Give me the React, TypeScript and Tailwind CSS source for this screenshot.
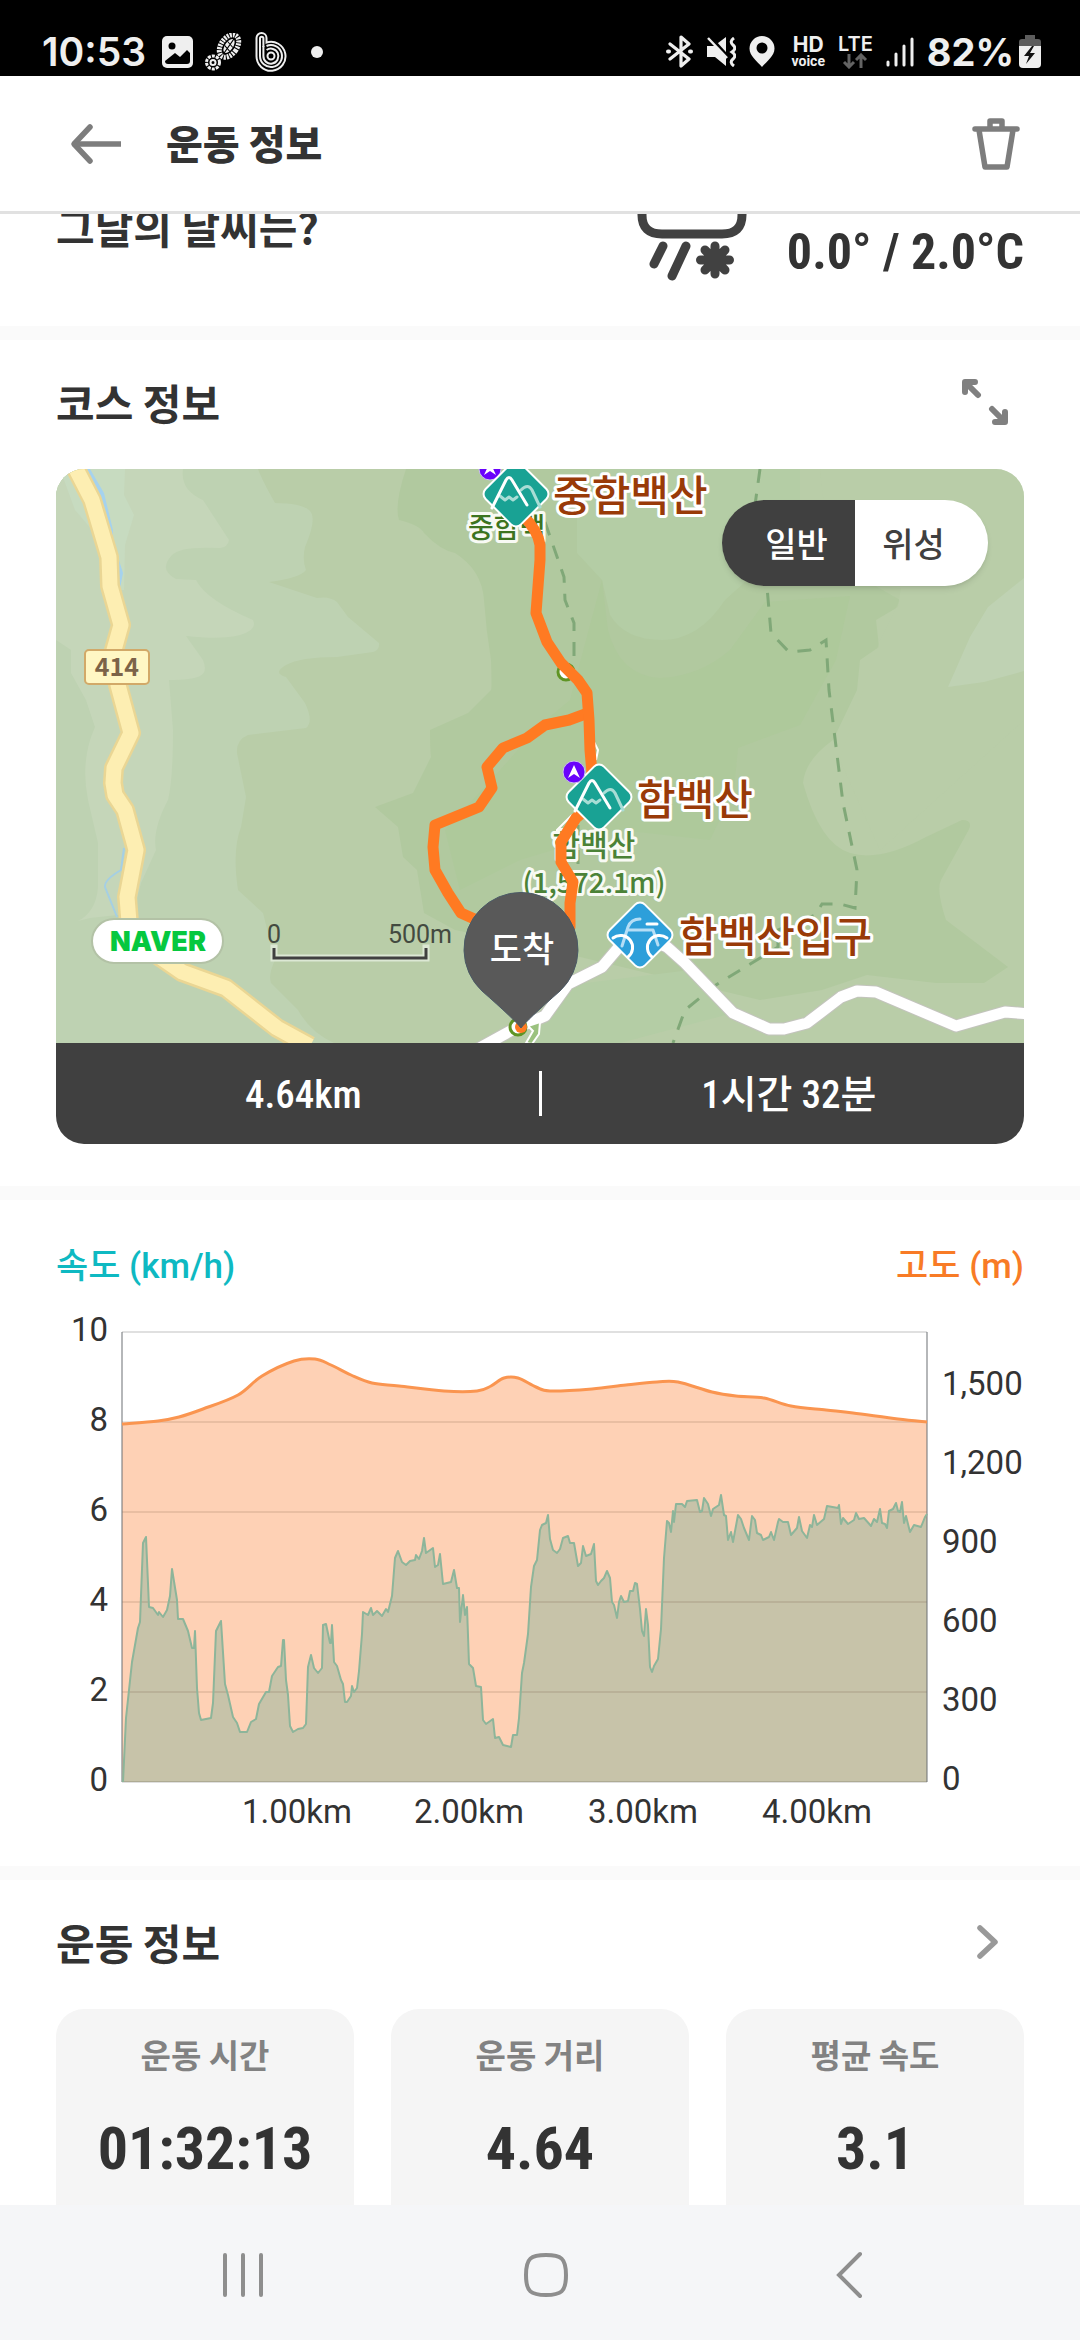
import type { ReactNode } from "react";

type Point = [number, number];

const ELEVATION: Point[] = [
  [122, 1424], [158, 1421], [179, 1417], [203, 1409], [238, 1395], [262, 1376], [294, 1361], [315, 1359],
  [331, 1365], [351, 1375], [372, 1383], [399, 1386], [444, 1391], [477, 1391], [491, 1386], [504, 1378],
  [518, 1378], [536, 1387], [550, 1391], [592, 1389], [626, 1385], [657, 1382], [678, 1382], [712, 1392],
  [736, 1396], [764, 1398], [791, 1406], [826, 1410], [853, 1413], [898, 1419], [927, 1422],
];

const SPEED: Point[] = [
  [123, 1782], [126, 1718], [132, 1662], [138, 1628], [140, 1622], [143, 1543], [146, 1537], [149, 1607],
  [153, 1608], [158, 1615], [159, 1612], [163, 1617], [167, 1610], [170, 1596], [172, 1569], [177, 1600],
  [178, 1619], [183, 1619], [188, 1631], [192, 1648], [194, 1648], [195, 1631], [197, 1688], [199, 1713],
  [201, 1720], [211, 1718], [213, 1703], [216, 1631], [221, 1621], [225, 1684], [228, 1695], [233, 1717],
  [237, 1723], [240, 1732], [247, 1732], [251, 1722], [256, 1719], [259, 1704], [266, 1692], [269, 1692],
  [272, 1676], [278, 1667], [281, 1666], [283, 1640], [284, 1640], [286, 1680], [288, 1695], [290, 1726],
  [293, 1732], [298, 1729], [303, 1728], [306, 1724], [308, 1667], [311, 1655], [314, 1668], [318, 1673],
  [322, 1668], [323, 1625], [326, 1624], [330, 1643], [331, 1643], [332, 1625], [334, 1662], [337, 1666],
  [341, 1680], [343, 1684], [345, 1702], [347, 1702], [351, 1696], [352, 1686], [354, 1692], [357, 1688],
  [359, 1671], [362, 1634], [363, 1612], [368, 1615], [371, 1608], [373, 1615], [377, 1611], [382, 1616],
  [386, 1609], [388, 1612], [392, 1596], [395, 1558], [398, 1551], [402, 1562], [406, 1565], [410, 1561],
  [415, 1560], [416, 1555], [419, 1559], [422, 1551], [424, 1538], [426, 1553], [433, 1548], [435, 1567],
  [438, 1565], [440, 1554], [443, 1584], [451, 1582], [454, 1570], [457, 1588], [459, 1588], [460, 1622],
  [463, 1595], [465, 1615], [467, 1607], [469, 1664], [473, 1668], [476, 1686], [481, 1687], [483, 1720],
  [486, 1724], [493, 1719], [495, 1738], [499, 1737], [503, 1745], [511, 1747], [513, 1735], [517, 1735],
  [519, 1718], [522, 1673], [524, 1663], [528, 1634], [531, 1587], [534, 1566], [537, 1560], [540, 1530],
  [542, 1525], [546, 1523], [548, 1515], [550, 1539], [553, 1550], [557, 1553], [560, 1549], [563, 1538],
  [568, 1536], [570, 1543], [574, 1543], [578, 1566], [581, 1563], [583, 1546], [586, 1556], [591, 1554],
  [594, 1544], [596, 1581], [598, 1585], [601, 1581], [604, 1578], [607, 1571], [610, 1578], [612, 1602],
  [614, 1605], [617, 1618], [619, 1602], [621, 1596], [624, 1602], [628, 1601], [630, 1591], [633, 1591],
  [635, 1583], [637, 1584], [640, 1609], [642, 1631], [644, 1636], [646, 1609], [648, 1625], [650, 1667],
  [652, 1672], [654, 1666], [658, 1659], [661, 1629], [664, 1558], [667, 1521], [669, 1523], [671, 1532],
  [673, 1511], [674, 1522], [676, 1504], [682, 1504], [685, 1507], [687, 1501], [697, 1500], [700, 1512],
  [702, 1511], [704, 1498], [708, 1504], [711, 1516], [713, 1509], [719, 1505], [721, 1495], [724, 1515],
  [726, 1516], [728, 1540], [731, 1532], [733, 1542], [738, 1515], [741, 1519], [744, 1528], [749, 1540],
  [752, 1516], [755, 1520], [757, 1533], [761, 1535], [763, 1540], [769, 1537], [771, 1532], [774, 1540],
  [778, 1522], [779, 1519], [783, 1522], [788, 1522], [791, 1535], [797, 1528], [799, 1517], [802, 1531],
  [807, 1538], [810, 1525], [812, 1527], [814, 1515], [817, 1525], [824, 1519], [827, 1506], [838, 1508],
  [839, 1505], [841, 1524], [843, 1518], [848, 1524], [854, 1520], [856, 1513], [859, 1519], [864, 1518],
  [871, 1526], [874, 1519], [877, 1522], [880, 1509], [882, 1523], [885, 1524], [887, 1528], [889, 1511],
  [893, 1509], [896, 1503], [898, 1511], [900, 1512], [902, 1502], [904, 1523], [906, 1516], [910, 1532],
  [914, 1525], [921, 1527], [925, 1517], [927, 1514],
];

const LEFT_TICKS = [10, 8, 6, 4, 2, 0];
const RIGHT_TICKS = ["1,500", "1,200", "900", "600", "300", "0"];
const DISTANCE_TICKS = [
  { label: "1.00km", x: 297 },
  { label: "2.00km", x: 469 },
  { label: "3.00km", x: 643 },
  { label: "4.00km", x: 817 },
];

const STATS = [
  { label: "운동 시간", value: "01:32:13" },
  { label: "운동 거리", value: "4.64" },
  { label: "평균 속도", value: "3.1" },
];

function toLine(points: Point[]) {
  return "M" + points.map((p) => p.join(",")).join("L");
}

// Catmull-Rom spline turned into cubic segments
function toCurve(points: Point[]) {
  let d = `M${points[0].join(",")}`;
  for (let i = 0; i < points.length - 1; i++) {
    const a = points[i - 1] || points[i];
    const b = points[i];
    const c = points[i + 1];
    const e = points[i + 2] || c;
    d += `C${b[0] + (c[0] - a[0]) / 6},${b[1] + (c[1] - a[1]) / 6} ${c[0] - (e[0] - b[0]) / 6},${c[1] - (e[1] - b[1]) / 6} ${c[0]},${c[1]}`;
  }
  return d;
}

function StatusBar() {
  return (
    <div className="flex h-[76px] shrink-0 items-center justify-between bg-black pt-[27px] pr-[39px] pl-[42px] font-['Inter',sans-serif] text-[#efefef]">
      <div className="flex items-center gap-3">
        <span className="mr-1 text-[39px] leading-none font-semibold">10:53</span>
        <svg width="31" height="32" viewBox="0 0 31 32">
          <rect width="31" height="32" rx="5" fill="#efefef" />
          <circle cx="10" cy="10" r="3.5" fill="#000" />
          <path d="M3 25l10-8 5 4 7-7 3 3v8q0 3-3 3H6q-3 0-3-3z" fill="#000" />
        </svg>
        <svg width="38" height="38" viewBox="0 0 38 38" fill="none" stroke="#efefef">
          <circle cx="8" cy="29.500" r="6.500" strokeWidth="3" strokeDasharray="3 1.100" />
          <circle cx="8" cy="29.500" r="2.500" strokeWidth="2" />
          <g transform="rotate(35 24 13)">
            <ellipse cx="24" cy="13" rx="8" ry="12.500" strokeWidth="5" strokeDasharray="2 1" />
            <ellipse cx="24" cy="13" rx="4" ry="8" fill="#efefef" stroke="none" />
            <path d="M24 4v18M20 10l8 2M20 15l8 2" stroke="#000" strokeWidth="1" />
          </g>
        </svg>
        <svg width="32" height="40" viewBox="0 0 32 40" fill="none" stroke="#efefef" strokeWidth="2">
          <path d="M1.500 24V6a5 5 0 0 1 10 0v4.500A14.500 14.500 0 1 1 1.500 24z" />
          <path d="M5 24V6.500a1.700 1.700 0 0 1 3.400 0V15" />
          <path d="M5 24a11 11 0 1 0 6.500-10" />
          <path d="M8.400 14v10a7.500 7.500 0 1 0 3.200-6" />
          <circle cx="16" cy="24" r="3.500" />
        </svg>
        <span className="ml-3 h-3 w-3 rounded-full bg-[#efefef]" />
      </div>

      <div className="flex items-center gap-[13px]">
        <svg width="27" height="33" viewBox="0 0 27 33" fill="none" stroke="#efefef" strokeWidth="3.200" strokeLinecap="round" strokeLinejoin="round">
          <path d="M4 9l19 15-8 7V2l8 7L4 24" />
          <path d="M2 16.500h1M24 16.500h1" strokeWidth="4" />
        </svg>
        <svg width="30" height="30" viewBox="0 0 30 30" fill="none" stroke="#efefef">
          <path d="M1 9h7L20 0v29L9 20H1z" fill="#efefef" stroke="none" />
          <path d="M4 0l18 20" stroke="#000" strokeWidth="3.500" />
          <path d="M2 1l19 20" strokeWidth="2.500" />
          <path d="M28 1q-5 3.500-1 7t-1 7q5 3.500 1 7t1 7" strokeWidth="3" />
        </svg>
        <svg width="26" height="31" viewBox="0 0 26 31">
          <path d="M13 0A12.500 12.500 0 0 1 25.500 12.500C25.500 20 18 25 13 31 8 25 .5 20 .5 12.500A12.500 12.500 0 0 1 13 0z" fill="#efefef" />
          <circle cx="13" cy="12" r="5.500" fill="#000" />
        </svg>
        <span className="ml-1 flex flex-col items-center font-bold">
          <span className="text-[21px] leading-[18px]">HD</span>
          <span className="font-['Roboto',sans-serif] text-[14px] leading-[14px]">voice</span>
        </span>
        <span className="flex flex-col items-center">
          <span className="text-[20px] leading-[18px] font-semibold">LTE</span>
          <svg width="26" height="16" viewBox="0 0 26 16" fill="none" stroke="#636363" strokeWidth="3">
            <path d="M7 1v13M2 9l5 5 5-5M19 15V2M14 7l5-5 5 5" />
          </svg>
        </span>
        <svg width="28" height="30" viewBox="0 0 28 30" stroke="#efefef" strokeWidth="3" strokeLinecap="round">
          <path d="M2 25v3M10 17v11M18 9v19M26 2v26" />
        </svg>
        <span className="text-[38px] leading-none font-bold">82%</span>
        <svg width="22" height="33" viewBox="0 0 22 33" className="-ml-2">
          <path d="M6 0h10v4h3q3 0 3 3v5H0V7q0-3 3-3h3z" fill="#5c5c5c" />
          <path d="M0 11h22v18q0 4-4 4H4q-4 0-4-4z" fill="#efefef" />
          <path d="M13 11L5 21h5l-3 8 9-11h-5l4-7z" fill="#111" />
        </svg>
      </div>
    </div>
  );
}

function Header() {
  return (
    <header className="flex h-[138px] shrink-0 items-center border-b-[3px] border-[#e1e1e1] bg-white pr-[59px] pl-[70px]">
      <button type="button" aria-label="뒤로">
        <svg width="52" height="42" viewBox="0 0 52 42" fill="none" stroke="#7d7d7d" strokeWidth="5.500" strokeLinejoin="round">
          <path d="M20 4L4 21l16 17" strokeLinecap="round" />
          <path d="M4 21h47" />
        </svg>
      </button>
      <h1 className="ml-[44px] flex-1 pb-1 text-[40px] leading-[56px] font-black">운동 정보</h1>
      <button type="button" aria-label="삭제">
        <svg width="50" height="56" viewBox="0 0 50 56" fill="none" stroke="#7d7d7d" strokeWidth="5.500" strokeLinecap="round" strokeLinejoin="round">
          <path d="M4 13h42M19 13V5h12v8M8 14l6 37h22l6-37" />
        </svg>
      </button>
    </header>
  );
}

function Weather() {
  return (
    <section className="flex h-[112px] items-start justify-between overflow-hidden bg-white px-[56px]">
      <h2 className="-mt-[18px] text-[42px] leading-[60px] font-bold">그날의 날씨는?</h2>
      <div className="flex items-start gap-10">
        <svg width="110" height="70" viewBox="0 0 110 70" fill="none" stroke="#414141" strokeLinecap="round">
          <path d="M5 -8v9q0 19 20 19h60q20 0 20-19v-9" strokeWidth="9" />
          <path d="M26 32l-9 18M49 32L35 62" strokeWidth="9" />
          <path d="M78 32v28M63.500 46h29M68 36l20 20M88 36L68 56" strokeWidth="9" />
        </svg>
        <p className="mt-1 font-['Roboto_Condensed','Noto_Sans_CJK_KR',sans-serif] text-[50px] leading-[68px] font-bold">
          0.0° / 2.0°C
        </p>
      </div>
    </section>
  );
}

interface MarkerProps {
  x: number;
  y: number;
  color: string;
  children: ReactNode;
}

function Marker({ x, y, color, children }: MarkerProps) {
  return (
    <g transform={`translate(${x} ${y})`}>
      <rect x="-25" y="-25" width="50" height="50" rx="7" transform="rotate(45)" fill={color} stroke="#fff" strokeWidth="2" />
      <g fill="none" stroke="#fff" strokeWidth="3" strokeLinecap="round" strokeLinejoin="round">
        {children}
      </g>
    </g>
  );
}

function Mountain() {
  return (
    <>
      <path d="M5-4Q12-11 16-4L24 13M-16 2l5 4 4-3 4 3 4-3" stroke="#a8ddd5" />
      <path d="M-24 14L-10-14q3-5 6 0L11 11" />
    </>
  );
}

function Compass({ x, y }: { x: number; y: number }) {
  return (
    <g transform={`translate(${x} ${y})`}>
      <circle r="11" fill="#6903fb" stroke="#c9c2ea" strokeWidth="1" />
      <path d="M0-7l6 13-6-4-6 4z" fill="#fff" />
    </g>
  );
}

const ROAD =
  "M70 455L76 469L92 500L109 557L110 586L121 625L114 650L118 685L131 733L114 768L113 783L115 795L125 810L136 850L127 897L129 922L150 950L169 963L182 972L226 988L277 1028L310 1046";
const STREET =
  "M476 1050L514 1029L545 1016L568 984L602 967L619 947L640 935L667 947L685 963L733 1013L769 1029L784 1029L807 1023L841 997L857 991L876 992L956 1026L1005 1012L1030 1014";
const ROUTE =
  "M522 515Q538 530 540 545L540 560L536 613L547 642L561 663L578 680L587 693L589 720L590 750L593 785L598 800L576 818L561 842L561 862L573 882L570 903L570 927L530 1000";
const BRANCH =
  "M588 713L569 720L545 725L527 738L503 748L487 767L492 788L479 807L435 825L433 847L435 870L448 893L461 913L490 926";

function CourseMap() {
  return (
    <svg viewBox="56 469 968 574" className="block h-auto w-full font-['Noto_Sans_CJK_KR',sans-serif]">
      <rect x="56" y="469" width="968" height="574" fill="#b9cda8" />
      <path
        fill="#bed2b2"
        d="M258 469Q262 480 275 503Q300 503 309 510T305 547Q302 560 306 570Q300 578 269 582L317 598Q330 596 337 602L348 617L379 643Q380 650 373 652L337 657Q300 657 286 665T286 677L305 703Q314 722 306 728L248 735Q236 740 237 753L246 797L241 827Q232 850 238 890L263 913L275 960Q268 975 271 983L298 1010Q310 1032 334 1043H56V469z"
      />
      <path
        fill="#c5d6b9"
        d="M183 469Q180 490 203 500L229 540Q228 547 220 548Q180 546 172 555Q158 570 176 579L196 580Q206 600 253 620Q258 630 240 635T186 636L203 660Q208 672 200 676T169 680L173 730Q173 780 168 800Q152 830 156 850L141 883Q135 905 136 913L90 918L78 921Q96 912 98 887L98 843L88 800Q80 760 95 727L86 700L71 673L71 650L56 640V469z"
      />
      <path fill="#c7dbc0" d="M60 469H125L124 495L134 515L125 545L124 590L108 590L92 530L75 510z" />
      <path
        fill="#b1c99f"
        d="M406 469Q394 505 399 520Q420 525 424 533Q440 550 455 553Q482 570 484 600T491 660Q492 690 491 690L468 713L430 730Q430 750 431 757L413 793L375 807L398 827L403 857L417 870L424 913L455 930L530 945L760 1000L822 990L867 975L936 983L984 983L1008 967L946 920Q936 890 941 880L967 833Q975 820 962 820L926 837Q880 862 850 853T803 783Q805 760 833 740L857 690L860 660L879 647L876 620L898 607L901 588L760 575L620 469z"
      />
      <path
        fill="#b4cda5"
        d="M590 469L577 507L577 553L602 580L610 615Q625 640 662 640T725 600L755 573L800 560V469zM570 985L690 970L733 1013L620 1043H530z"
      />
      <path
        fill="#aec99b"
        d="M602 580L608 630Q620 676 660 678Q700 676 730 650L765 602L850 596L836 660L800 725L738 748L734 790L710 840L620 830L520 860L460 890L445 830L500 770L540 725L570 700z"
      />
      <path fill="#b9cda8" d="M820 469H1024V720L880 850L840 760L880 640L900 600L830 560z" opacity=".6" />
      <path fill="#bfd2b3" d="M1024 578L988 607L970 637L948 687L984 682L1024 671z" />

      <path d="M90 469L104 493L113 530L113 548L100 500L86 469zM118 557L123 573L120 588z" fill="#a5d2ee" />
      <path d="M124 848L121 870Q104 880 105 887L117 917" fill="none" stroke="#a5cfe4" strokeWidth="2" />

      <g fill="none" stroke="#80a878" strokeWidth="3" strokeDasharray="14 11">
        <path d="M760 469L755 505L767 587L771 633L789 652L810 650L826 640L829 690L843 803L857 870L855 908L840 904L822 904L815 915L778 930V947L716 985L685 1010L673 1043" />
        <path d="M545 522L564 577L565 600L574 623V667M578 825V870" />
      </g>

      <g fill="none" strokeLinejoin="round">
        <path d={ROAD} stroke="#ead694" strokeWidth="20" />
        <path d={ROAD} stroke="#fdeeb2" strokeWidth="15" />
        <path d={STREET} stroke="#c3c4bd" strokeWidth="13" />
        <path d={STREET} stroke="#fff" strokeWidth="11" />
        <path d="M533 610L547 645L566 673M594 742L598 750L596 760M572 815L557 830L557 862" stroke="#fff" strokeWidth="2" />
      </g>

      <g strokeLinejoin="round" stroke="#f8faf4" strokeWidth="6" paintOrder="stroke">
        <text x="468" y="538" fontSize="28" fontWeight="500" fill="#3c7420">중함백</text>
        <text x="594" y="856" fontSize="30" fontWeight="500" fill="#4b8237" textAnchor="middle">함백산</text>
        <text x="594" y="893" fontSize="28" fontWeight="500" fill="#4b8237" textAnchor="middle">(1,572.1m)</text>
      </g>
      <circle cx="566" cy="672" r="8" fill="#fff" stroke="#5f9424" strokeWidth="3" />

      <g fill="none" stroke="#ff7a22" strokeWidth="11" strokeLinejoin="round">
        <path d={BRANCH} />
        <path d={ROUTE} />
      </g>

      <Compass x={490} y={469} />
      <Marker x={516} y={494} color="#19a294"><Mountain /></Marker>
      <Marker x={599} y={797} color="#19a294"><Mountain /></Marker>
      <Compass x={574} y={772} />
      <Marker x={640} y={935} color="#2d9fda">
        <path d="M-18 11L-12-8q3-8 12-8M-12-5H13L18 10" stroke="#b5def6" />
        <path d="M7-11H17M-27 3A11 11 0 1 1-12 22M27 3A11 11 0 1 0 12 22" />
      </Marker>

      <g strokeLinejoin="round" stroke="#fff" strokeWidth="6" paintOrder="stroke" fill="#993a08" fontSize="42" fontWeight="500">
        <text x="553" y="511">중함백산</text>
        <text x="637" y="815">함백산</text>
        <text x="679" y="952">함백산입구</text>
      </g>

      <rect x="85" y="650" width="64" height="34" rx="4" fill="#fff7c4" stroke="#d2a968" strokeWidth="2" />
      <text x="117" y="676" fontSize="25" fontWeight="700" fill="#7c6348" textAnchor="middle">414</text>

      <rect x="92" y="919" width="131" height="44" rx="22" fill="#fff" stroke="#b3c2a6" strokeWidth="2" />
      <text x="158" y="951" className="font-['Inter',sans-serif]" fontSize="27" fontWeight="900" fill="#06c83f" textAnchor="middle">
        NAVER
      </text>

      <g className="font-['Roboto',sans-serif]" fill="#434a40" fontSize="25">
        <text x="274" y="943" textAnchor="middle">0</text>
        <text x="452" y="943" textAnchor="end">500m</text>
      </g>
      <path d="M274 948V958H426V948" fill="none" stroke="#dce8d4" strokeWidth="7" strokeLinecap="square" />
      <path d="M274 948V958H426V948" fill="none" stroke="#404040" strokeWidth="3" />

      <path d="M526 1043l7-12-5-5 12-4-1 12-7 10z" fill="#9bc27f" stroke="#fff" strokeWidth="2" />
      <circle cx="518" cy="1027" r="8" fill="#fff" stroke="#5f9424" strokeWidth="3" />
      <circle cx="521" cy="1027" r="6" fill="#ff7a22" />
      <path d="M521 1028Q515 1020 482 991A57 57 0 1 1 560 991Q527 1020 521 1028z" fill="#595959" stroke="#4b5a66" strokeWidth="1" />
      <text x="522" y="962" fontSize="35" fontWeight="500" fill="#fff" textAnchor="middle">도착</text>
    </svg>
  );
}

function Course() {
  return (
    <section className="bg-white px-[56px] pt-[22px] pb-[42px]">
      <div className="mb-[27px] flex h-20 items-center justify-between pr-4">
        <h2 className="text-[42px] leading-[60px] font-bold">코스 정보</h2>
        <button type="button" aria-label="지도 확대">
          <svg width="46" height="46" viewBox="0 0 46 46" fill="none" stroke="#808080" strokeWidth="6" strokeLinejoin="round" strokeLinecap="round">
            <path d="M3 13V3H13M4 4L16 16M43 33V43H33M42 42L30 30" />
          </svg>
        </button>
      </div>
      <div className="overflow-hidden rounded-[28px]">
        <div className="relative">
          <CourseMap />
          <div className="absolute top-[31px] right-9 flex h-[86px] overflow-hidden rounded-full text-[34px] font-medium shadow-md">
            <button type="button" aria-pressed="true" className="w-[133px] bg-[#404040] pb-[2px] pl-4 text-white">일반</button>
            <button type="button" aria-pressed="false" className="w-[133px] bg-white pr-4 pb-[2px] text-[#404040]">위성</button>
          </div>
        </div>
        <div className="flex h-[101px] items-center bg-[#404040] font-['Roboto_Condensed','Noto_Sans_CJK_KR',sans-serif] text-[39px] font-medium text-white">
          <p className="flex-1 pt-1 pl-3 text-center">4.64km</p>
          <span className="h-[45px] w-[3px] bg-white" />
          <p className="flex-1 pt-1 pl-3 text-center">1시간 32분</p>
        </div>
      </div>
    </section>
  );
}

function Chart() {
  const elevation = toCurve(ELEVATION);
  const speed = toLine(SPEED);

  return (
    <section className="bg-white px-[56px] pt-[42px] pb-[26px]">
      <div className="flex items-center justify-between font-['Roboto','Noto_Sans_CJK_KR',sans-serif] text-[35px] leading-[50px] font-medium">
        <h2 className="text-[#0eb9c2]">속도 (km/h)</h2>
        <h2 className="text-[#f87b26]">고도 (m)</h2>
      </div>
      <svg viewBox="56 1292 968 548" className="block h-auto w-full font-['Roboto',sans-serif]" fontSize="33" fill="#333">
        <path d={`${elevation}V1782H122z`} fill="#fed1b5" />
        <path d={`${speed}V1782z`} fill="#c7c3a9" />
        <path d="M122 1422H927M122 1512H927M122 1602H927M122 1692H927" stroke="#5a3c28" strokeOpacity=".13" strokeWidth="2" />
        <path d="M122 1332H927M122 1782H927" stroke="#000" strokeOpacity=".12" strokeWidth="2" />
        <path d="M122 1332V1782M927 1332V1782" stroke="#6b7074" strokeOpacity=".5" strokeWidth="2" />
        <path d={elevation} fill="none" stroke="#fa9550" strokeWidth="3" />
        <path d={speed} fill="none" stroke="#8db59a" strokeWidth="2" strokeLinejoin="round" />
        {LEFT_TICKS.map((tick, i) => (
          <text key={tick} x="108" y={1341 + i * 90} textAnchor="end">{tick}</text>
        ))}
        {RIGHT_TICKS.map((tick, i) => (
          <text key={tick} x="942" y={1395 + i * 79} textAnchor="start">{tick}</text>
        ))}
        {DISTANCE_TICKS.map((tick) => (
          <text key={tick.label} x={tick.x} y="1823" textAnchor="middle">{tick.label}</text>
        ))}
      </svg>
    </section>
  );
}

function Summary() {
  return (
    <section className="bg-white px-[56px] pt-[22px]">
      <div className="mb-[27px] flex h-20 items-center justify-between pr-6">
        <h2 className="text-[42px] leading-[60px] font-bold">운동 정보</h2>
        <button type="button" aria-label="운동 정보 더보기">
          <svg width="24" height="38" viewBox="0 0 24 38" fill="none" stroke="#999" strokeWidth="5.500" strokeLinejoin="round" strokeLinecap="round">
            <path d="M4 5l15 14L4 33" />
          </svg>
        </button>
      </div>
      <div className="grid grid-cols-3 gap-[37px]">
        {STATS.map((stat) => (
          <div key={stat.label} className="rounded-[28px] bg-[#f5f5f5] pt-5 pb-12 text-center">
            <p className="text-[33px] leading-[50px] font-bold text-[#828282]">{stat.label}</p>
            <p className="mt-[30px] font-['Roboto_Condensed','Noto_Sans_CJK_KR',sans-serif] text-[60px] leading-[80px] font-bold">
              {stat.value}
            </p>
          </div>
        ))}
      </div>
    </section>
  );
}

function NavBar() {
  return (
    <nav className="flex h-[135px] shrink-0 items-center justify-between bg-[#f5f6f8] pt-1 pr-[217px] pl-[221px]">
      <button type="button" aria-label="최근 앱">
        <svg width="44" height="46" viewBox="0 0 44 46" stroke="#8e8e8e" strokeWidth="4" strokeLinecap="round">
          <path d="M4 3v40M22 3v40M40 3v40" />
        </svg>
      </button>
      <button type="button" aria-label="홈">
        <svg width="46" height="46" viewBox="0 0 46 46" fill="none" stroke="#8e8e8e" strokeWidth="4">
          <path d="M23 3C38 3 43 6 43 23S38 43 23 43 3 40 3 23 8 3 23 3z" />
        </svg>
      </button>
      <button type="button" aria-label="뒤로 가기" className="pl-2">
        <svg width="28" height="48" viewBox="0 0 28 48" fill="none" stroke="#8e8e8e" strokeWidth="4" strokeLinecap="round">
          <path d="M25 3L4 24l21 21" />
        </svg>
      </button>
    </nav>
  );
}

export default function App() {
  return (
    <div className="flex h-screen flex-col overflow-hidden bg-white font-['Noto_Sans_CJK_KR',sans-serif] text-[#333]">
      <StatusBar />
      <Header />
      <main className="flex min-h-0 flex-1 flex-col gap-[14px] overflow-hidden bg-[#fafafa] *:shrink-0">
        <Weather />
        <Course />
        <Chart />
        <Summary />
      </main>
      <NavBar />
    </div>
  );
}
